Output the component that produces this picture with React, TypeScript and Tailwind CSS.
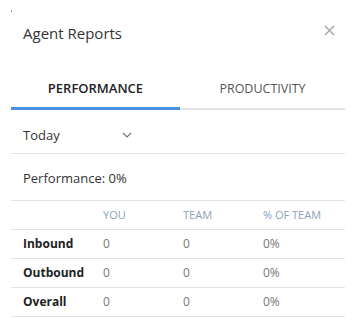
import React from 'react';

const rows = [
  { label: 'Inbound', you: '0', team: '0', pct: '0%' },
  { label: 'Outbound', you: '0', team: '0', pct: '0%' },
  { label: 'Overall', you: '0', team: '0', pct: '0%' },
];

export default function App() {
  return (
    <div className="relative w-[356px] h-[322px] bg-white px-[11px] text-[#333]" style={{ fontFamily: '"Open Sans", "Noto Sans", sans-serif' }}>
      <span className="absolute left-[11px] top-[10px] w-px h-[2px] bg-[#999]" />
      {/* header */}
      <div className="flex items-center justify-between h-[70px] pl-3 pr-[10px] pb-[4px]">
        <h2 className="text-[15px] text-[#333]">Agent Reports</h2>
        <svg width="11" height="11" viewBox="0 0 11 11" className="text-[#a8a8a8] mb-[6px]">
          <path d="M1 1L10 10M10 1L1 10" stroke="currentColor" strokeWidth="1.5" />
        </svg>
      </div>

      {/* tabs */}
      <div className="flex border-b-2 border-[#e3e3e3] h-[40px]">
        <div className="relative w-[169px] flex items-center justify-center text-[13px] font-semibold text-[#222]">
          PERFORMANCE
          <span className="absolute left-0 right-0 -bottom-[2px] h-[3px] bg-[#4a90e2]" />
        </div>
        <div className="flex-1 flex items-center justify-center text-[12.5px] text-[#555]">PRODUCTIVITY</div>
      </div>

      {/* period */}
      <div className="flex items-center h-[44px] pl-3 pt-[8px] border-b border-[#e3e3e3] text-[13px]">
        <span className="w-[99px]">Today</span>
        <svg width="10" height="6" viewBox="0 0 10 6" className="text-[#777] mb-[2px]">
          <path d="M1 1L5 5L9 1" fill="none" stroke="currentColor" strokeWidth="1.2" />
        </svg>
      </div>

      <div className="flex items-center h-[47px] pl-3 pt-[4px] border-b border-[#e3e3e3] text-[13px]">Performance: 0%</div>

      <table className="w-full text-[12px] border-collapse">
        <thead>
          <tr className="h-[28px] border-b border-[#e3e3e3] text-[11px] text-[#8d9fba]">
            <th className="w-[80px]" />
            <th className="w-[80px] pl-3 text-left font-normal">YOU</th>
            <th className="w-[80px] pl-3 text-left font-normal">TEAM</th>
            <th className="pl-3 text-left font-normal">% OF TEAM</th>
          </tr>
        </thead>
        <tbody>
          {rows.map((r) => (
            <tr key={r.label} className="h-[29px] border-b border-[#e3e3e3]">
              <td className="pl-3 font-bold text-[#222]">{r.label}</td>
              <td className="pl-3 text-[#777]">{r.you}</td>
              <td className="pl-3 text-[#777]">{r.team}</td>
              <td className="pl-3 text-[#777]">{r.pct}</td>
            </tr>
          ))}
        </tbody>
      </table>
    </div>
  );
}
